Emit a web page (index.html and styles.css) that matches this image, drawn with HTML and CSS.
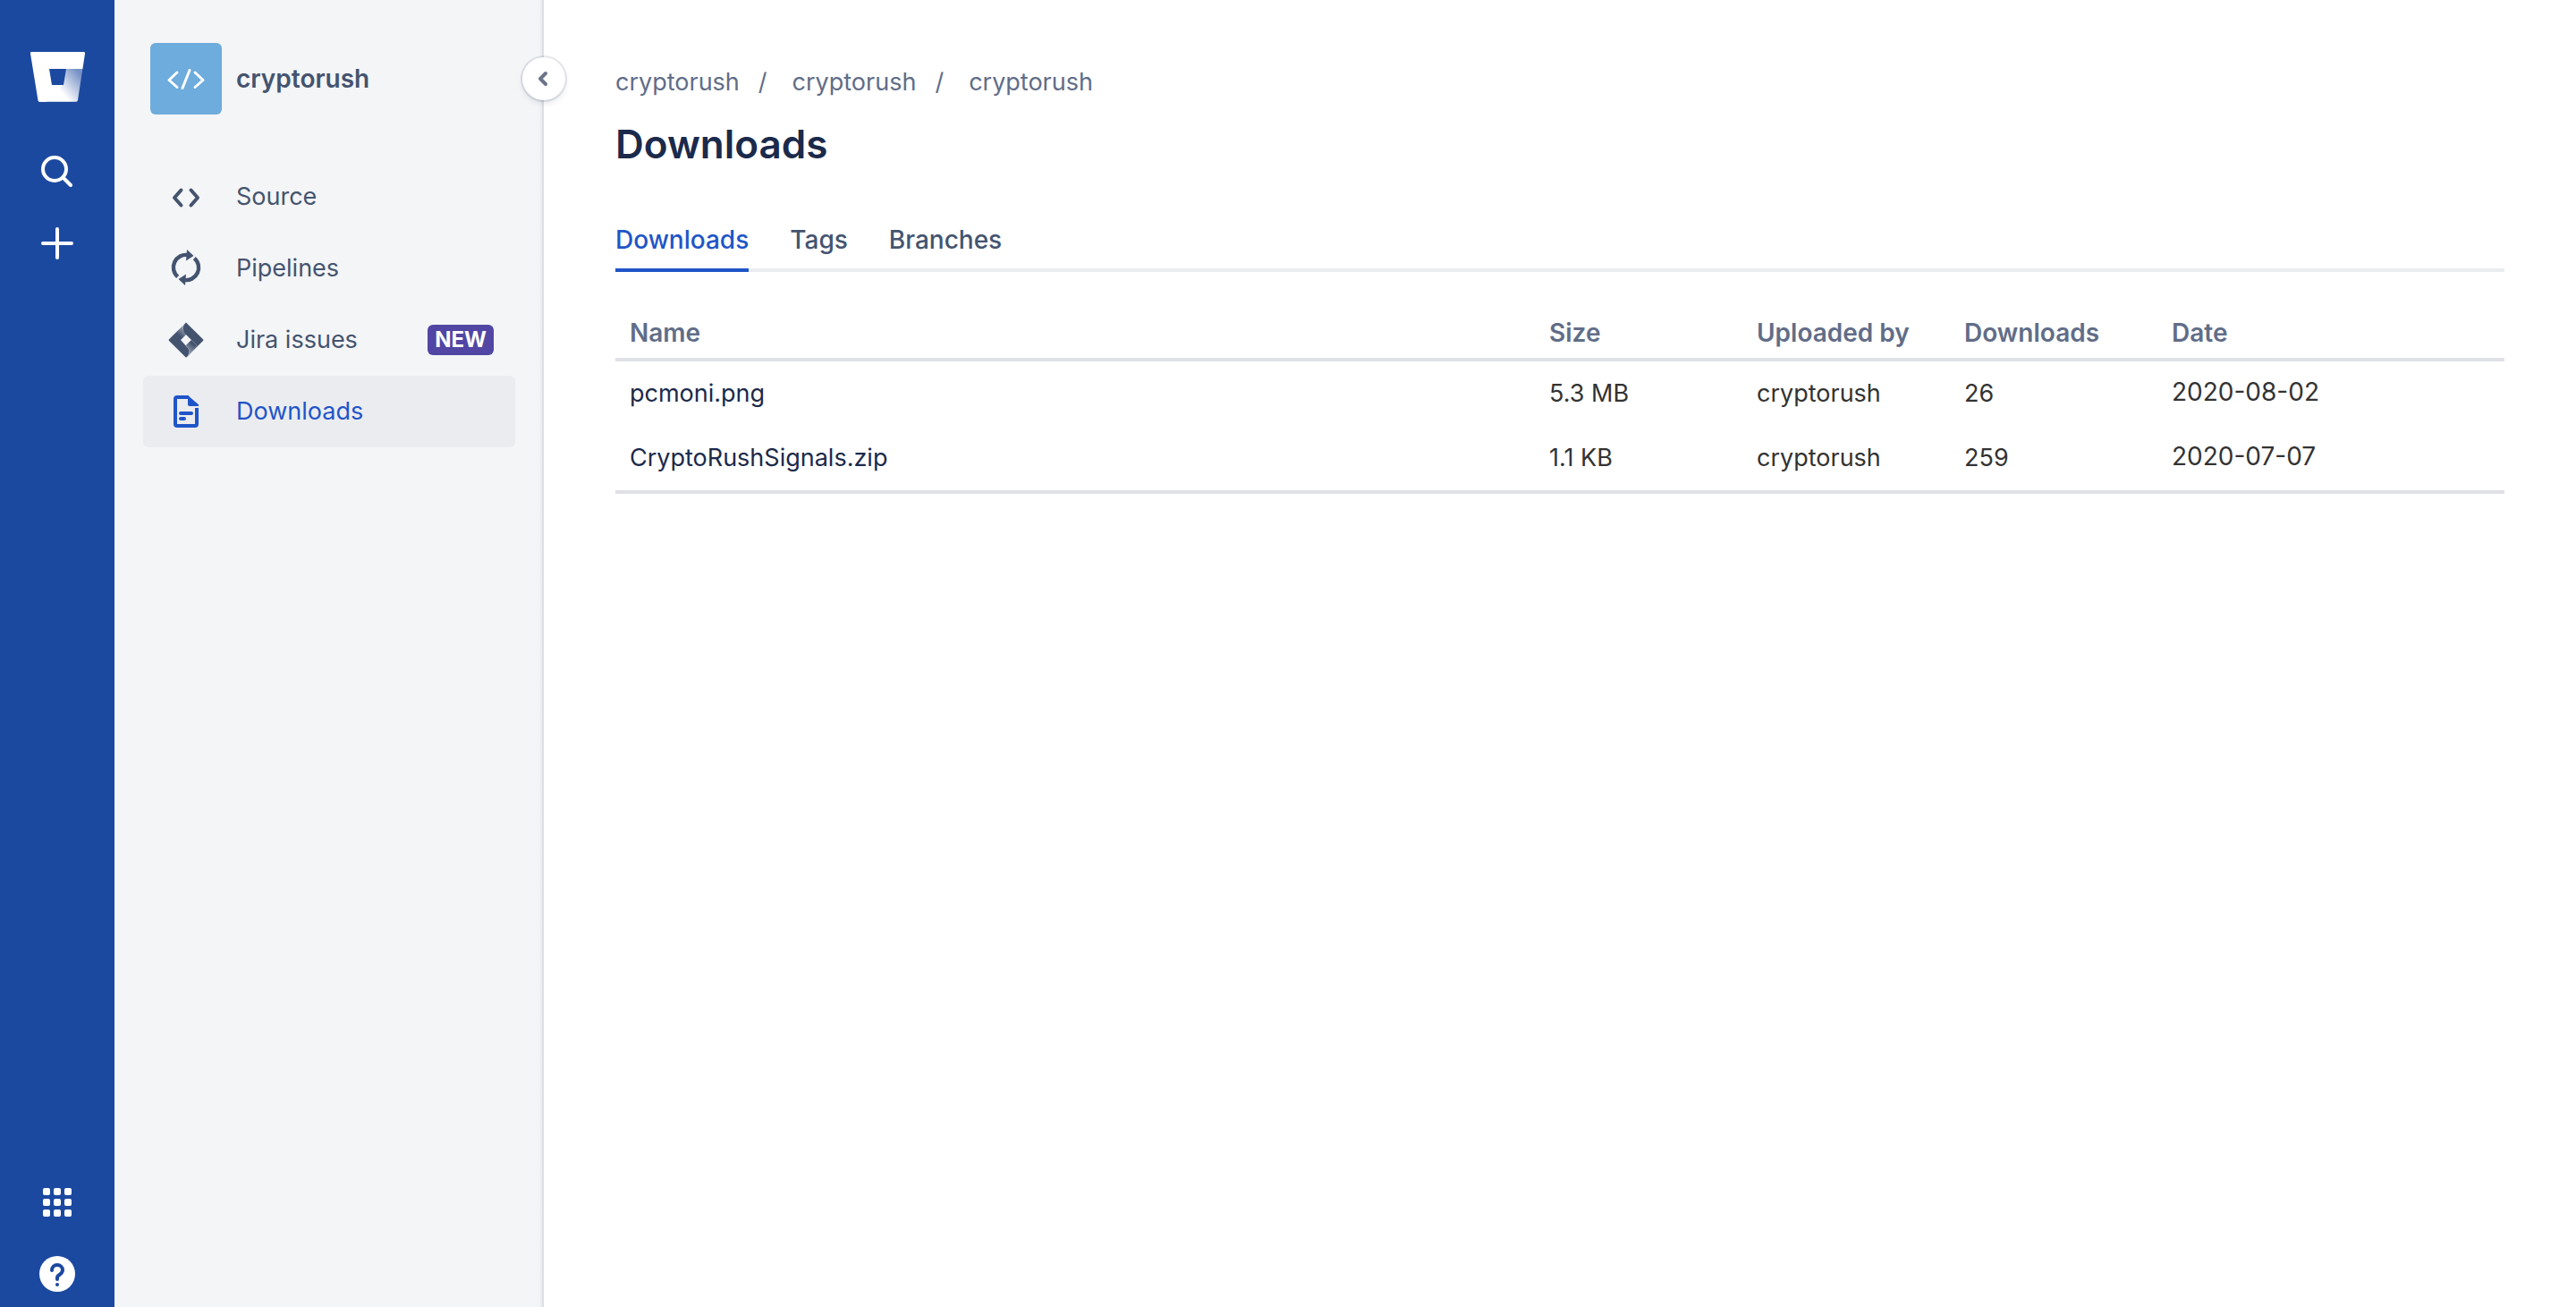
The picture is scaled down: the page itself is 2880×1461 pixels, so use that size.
FILE: index.html
```html
<!DOCTYPE html>
<html lang="en">
<head>
<meta charset="utf-8">
<title>cryptorush / Downloads</title>
<meta name="viewport" content="width=device-width, initial-scale=1">
<link rel="stylesheet" href="styles.css">
</head>
<body>
<div class="layout">
  <nav class="rail" aria-label="Global">
    <div class="rail-group">
      <a class="rail-logo" href="#" aria-label="Bitbucket">
        <svg width="64" height="56" viewBox="0 0 64 56">
          <defs>
            <linearGradient id="bucket-shade" x1="60" y1="20" x2="34" y2="42" gradientUnits="userSpaceOnUse">
              <stop offset="0.15" stop-color="#fff" stop-opacity="0.4"/>
              <stop offset="1" stop-color="#fff"/>
            </linearGradient>
          </defs>
          <path fill="#fff" d="M3.6 0H61.4a1.6 1.6 0 0 1 1.6 1.9L60.4 19H23l3 18h12L20 55.8H12.400a1.900 1.900 0 0 1-1.900-1.600L2 1.900A1.600 1.600 0 0 1 3.600 0Z"/>
          <path fill="url(#bucket-shade)" d="M60.400 19H42L39 37H26L11.500 55.500l.9.300H53a2 2 0 0 0 2-1.700Z"/>
        </svg>
      </a>
      <button class="rail-button" type="button" aria-label="Search">
        <svg class="icon" viewBox="0 0 48 48" fill="none" stroke="#fff" stroke-width="4" stroke-linecap="round">
          <circle cx="21" cy="21" r="13"/><path d="M31 31 39 39"/>
        </svg>
      </button>
      <button class="rail-button" type="button" aria-label="Create">
        <svg class="icon" viewBox="0 0 48 48" fill="none" stroke="#fff" stroke-width="4" stroke-linecap="round">
          <path d="M24 8v32M8 24h32"/>
        </svg>
      </button>
    </div>
    <div class="rail-group">
      <button class="rail-button" type="button" aria-label="Switch apps">
        <svg class="icon" viewBox="0 0 48 48" fill="#fff">
          <rect x="8" y="8" width="8" height="8" rx="2"/><rect x="20" y="8" width="8" height="8" rx="2"/><rect x="32" y="8" width="8" height="8" rx="2"/>
          <rect x="8" y="20" width="8" height="8" rx="2"/><rect x="20" y="20" width="8" height="8" rx="2"/><rect x="32" y="20" width="8" height="8" rx="2"/>
          <rect x="8" y="32" width="8" height="8" rx="2"/><rect x="20" y="32" width="8" height="8" rx="2"/><rect x="32" y="32" width="8" height="8" rx="2"/>
        </svg>
      </button>
      <button class="rail-button" type="button" aria-label="Help">
        <svg class="icon" viewBox="0 0 48 48">
          <circle cx="24" cy="24" r="20" fill="#fff"/>
          <path d="M18 20c0-3.500 2.600-6 6-6s6 2.400 6 5.600c0 2.400-1.300 3.800-3 5-1.800 1.200-3 1.900-3 3.600V30" fill="none" stroke="#1c49a0" stroke-width="4" stroke-linecap="round"/>
          <circle cx="24" cy="36" r="2" fill="#1c49a0"/>
        </svg>
      </button>
    </div>
  </nav>

  <aside class="sidebar">
    <a class="project" href="#">
      <span class="avatar">
        <svg width="80" height="80" viewBox="0 0 80 80" fill="none" stroke="#fff" stroke-width="3" stroke-linecap="round" stroke-linejoin="round">
          <path d="M30 33 21 41.500 30 49.500M44 30.500 36 50.500M50 33 59 41.500 50 49.500"/>
        </svg>
      </span>
      <span class="project-name">cryptorush</span>
    </a>
    <ul class="menu">
      <li><a class="menu-item" href="#">
        <svg class="icon" viewBox="0 0 48 48" fill="none" stroke="currentColor" stroke-width="4" stroke-linecap="round" stroke-linejoin="round"><path d="M18.500 16.500 11 25 18.500 33.500M29.500 16.500 37 25 29.500 33.500"/></svg>
        <span>Source</span></a></li>
      <li><a class="menu-item" href="#">
        <svg class="icon" viewBox="0 0 48 48"><path d="M14.700 33.400A14 14 0 0 1 26 9M33.300 12.600A14 14 0 0 1 22 37" fill="none" stroke="currentColor" stroke-width="4.400"/><path fill="currentColor" d="M25 3 32.500 10 24 15.500ZM23 43 15.500 36 24 30.500Z"/></svg>
        <span>Pipelines</span></a></li>
      <li><a class="menu-item" href="#">
        <svg class="icon" viewBox="0 0 48 48">
          <defs>
            <linearGradient id="fold-top" x1="22" y1="10" x2="15" y2="18" gradientUnits="userSpaceOnUse"><stop offset="0" stop-color="#44546f" stop-opacity="0.500"/><stop offset="1" stop-color="#44546f"/></linearGradient>
            <linearGradient id="fold-bottom" x1="26" y1="38" x2="33" y2="30" gradientUnits="userSpaceOnUse"><stop offset="0" stop-color="#44546f" stop-opacity="0.500"/><stop offset="1" stop-color="#44546f"/></linearGradient>
          </defs>
          <path fill="url(#fold-top)" d="M24 4.500 5 23.200a1.200 1.200 0 0 0 0 1.700L24 43.700 30 37.500 18 24 24 18Z"/>
          <path fill="#44546f" d="M24 4.500 43 23.200a1.200 1.200 0 0 1 0 1.700L24 43.700C28 39 27 33 24 30L30 24 24 18C20 14 20 8 24 4.500Z"/>
          <path fill="#f4f5f7" d="M24 30 30 24 36 30 26 41.700C28.500 37 27 33 24 30Z"/>
          <path fill="url(#fold-bottom)" d="M24 30 30 24 36 30 26 41.700C28.500 37 27 33 24 30Z"/>
        </svg>
        <span>Jira issues</span><span class="badge">NEW</span></a></li>
      <li><a class="menu-item is-active" href="#" aria-current="page">
        <svg class="icon" viewBox="0 0 48 48" fill="none" stroke="currentColor" stroke-width="4"><path d="M27 8H14a2 2 0 0 0-2 2v28a2 2 0 0 0 2 2h20a2 2 0 0 0 2-2V20"/><path d="M18 26h12M18 32h4" stroke-linecap="round"/><path fill="currentColor" stroke="none" d="M26 6 38 16.200V18H28a2 2 0 0 1-2-2Z"/></svg>
        <span>Downloads</span></a></li>
    </ul>
    <button class="collapse" type="button" aria-label="Collapse sidebar">
      <svg width="48" height="48" viewBox="0 0 48 48" fill="none" stroke="#6b7488" stroke-width="4" stroke-linecap="round" stroke-linejoin="round"><path d="M26 18 20 24 26 30"/></svg>
    </button>
  </aside>

  <main class="content">
    <nav aria-label="Breadcrumb">
      <ol class="breadcrumbs">
        <li><a href="#">cryptorush</a></li>
        <li><a href="#">cryptorush</a></li>
        <li><a href="#">cryptorush</a></li>
      </ol>
    </nav>
    <h1 class="title">Downloads</h1>
    <nav class="tabs" aria-label="Downloads sections">
      <a class="tab is-active" href="#" aria-current="page">Downloads</a>
      <a class="tab" href="#">Tags</a>
      <a class="tab" href="#">Branches</a>
    </nav>
    <table class="files">
      <colgroup><col><col class="col-meta"><col class="col-meta"><col class="col-meta"><col class="col-date"></colgroup>
      <thead>
        <tr><th scope="col">Name</th><th scope="col">Size</th><th scope="col">Uploaded by</th><th scope="col">Downloads</th><th scope="col">Date</th></tr>
      </thead>
      <tbody>
        <tr><td><a href="#">pcmoni.png</a></td><td>5.3 MB</td><td>cryptorush</td><td>26</td><td class="date"><time datetime="2020-08-02">2020-08-02</time></td></tr>
        <tr><td><a href="#">CryptoRushSignals.zip</a></td><td>1.1 KB</td><td>cryptorush</td><td>259</td><td class="date"><time datetime="2020-07-07">2020-07-07</time></td></tr>
      </tbody>
    </table>
  </main>
</div>
</body>
</html>
```
FILE: styles.css
```css
* { box-sizing: border-box; }

body {
  margin: 0;
  background: #fff;
  color: #333;
  font: 27px/40px Inter, "Liberation Sans", sans-serif;
}

a { color: inherit; text-decoration: none; }
ul, ol { margin: 0; padding: 0; list-style: none; }
svg { display: block; }
button { padding: 0; border: 0; background: none; cursor: pointer; }

.icon { width: 48px; height: 48px; flex: none; }

.layout {
  display: grid;
  grid-template-columns: 128px 480px 1fr;
  min-height: 100vh;
}

/* Global navigation */
.rail {
  display: flex;
  flex-direction: column;
  justify-content: space-between;
  padding: 58px 0 5px;
  background: #1c49a0;
}
.rail-group {
  display: flex;
  flex-direction: column;
  align-items: center;
  gap: 16px;
}
.rail-logo { margin-bottom: 30px; }
.rail-button {
  display: grid;
  place-items: center;
  width: 64px;
  height: 64px;
}

/* Project sidebar */
.sidebar {
  position: relative;
  padding: 48px 32px;
  background: linear-gradient(to left, #dcdee3 2px, #e9ebee 2px, #f4f5f7 6px);
  color: #44546f;
}
.project {
  display: flex;
  align-items: center;
  gap: 16px;
  margin-bottom: 52px;
  padding-left: 8px;
  font-size: 28px;
  font-weight: 600;
}
.avatar {
  border-radius: 6px;
  background: #6dacdc;
}
.menu-item {
  display: flex;
  align-items: center;
  gap: 32px;
  height: 80px;
  padding: 0 24px;
  border-radius: 6px;
}
.menu-item.is-active {
  background: #ebecf0;
  color: #1f55c8;
}
.badge {
  margin-left: auto;
  padding: 0 8px;
  border-radius: 6px;
  background: #5146a3;
  color: #fff;
  font-size: 24px;
  font-weight: 700;
  line-height: 34px;
}
.collapse {
  position: absolute;
  top: 64px;
  right: -24px;
  border-radius: 50%;
  background: #fff;
  box-shadow: 0 0 0 2px rgba(9, 30, 66, 0.1), 0 4px 8px -2px rgba(9, 30, 66, 0.16);
}

/* Page */
.content { padding: 72px 80px; }
.breadcrumbs {
  display: flex;
  color: #616d88;
}
.breadcrumbs li + li::before {
  content: "/";
  padding: 0 28px 0 21px;
}
.title {
  margin: 21px 0 47px;
  color: #1b2a4b;
  font-size: 44px;
  font-weight: 600;
  line-height: 56px;
}
.tabs {
  display: flex;
  gap: 46px;
  box-shadow: inset 0 -4px #ebecf0;
  color: #44546f;
  font-size: 28px;
  font-weight: 500;
}
.tab {
  padding: 12px 0;
  border-bottom: 4px solid transparent;
}
.tab.is-active {
  border-color: #1f55c8;
  color: #1f55c8;
}

.files {
  width: 100%;
  margin-top: 40px;
  border-collapse: collapse;
  table-layout: fixed;
  text-align: left;
}
.col-meta { width: 232px; }
.col-date { width: 388px; }
.files th {
  padding: 8px 16px;
  color: #616d88;
  font-size: 28px;
  font-weight: 600;
}
.files td { padding: 16px; vertical-align: top; }
.files .date {
  padding: 14px 16px 18px;
  font-size: 28px;
}
.files a { color: #1b2a4b; }
.files tbody {
  border-top: 4px solid #dfe1e6;
  border-bottom: 4px solid #dfe1e6;
}
```
